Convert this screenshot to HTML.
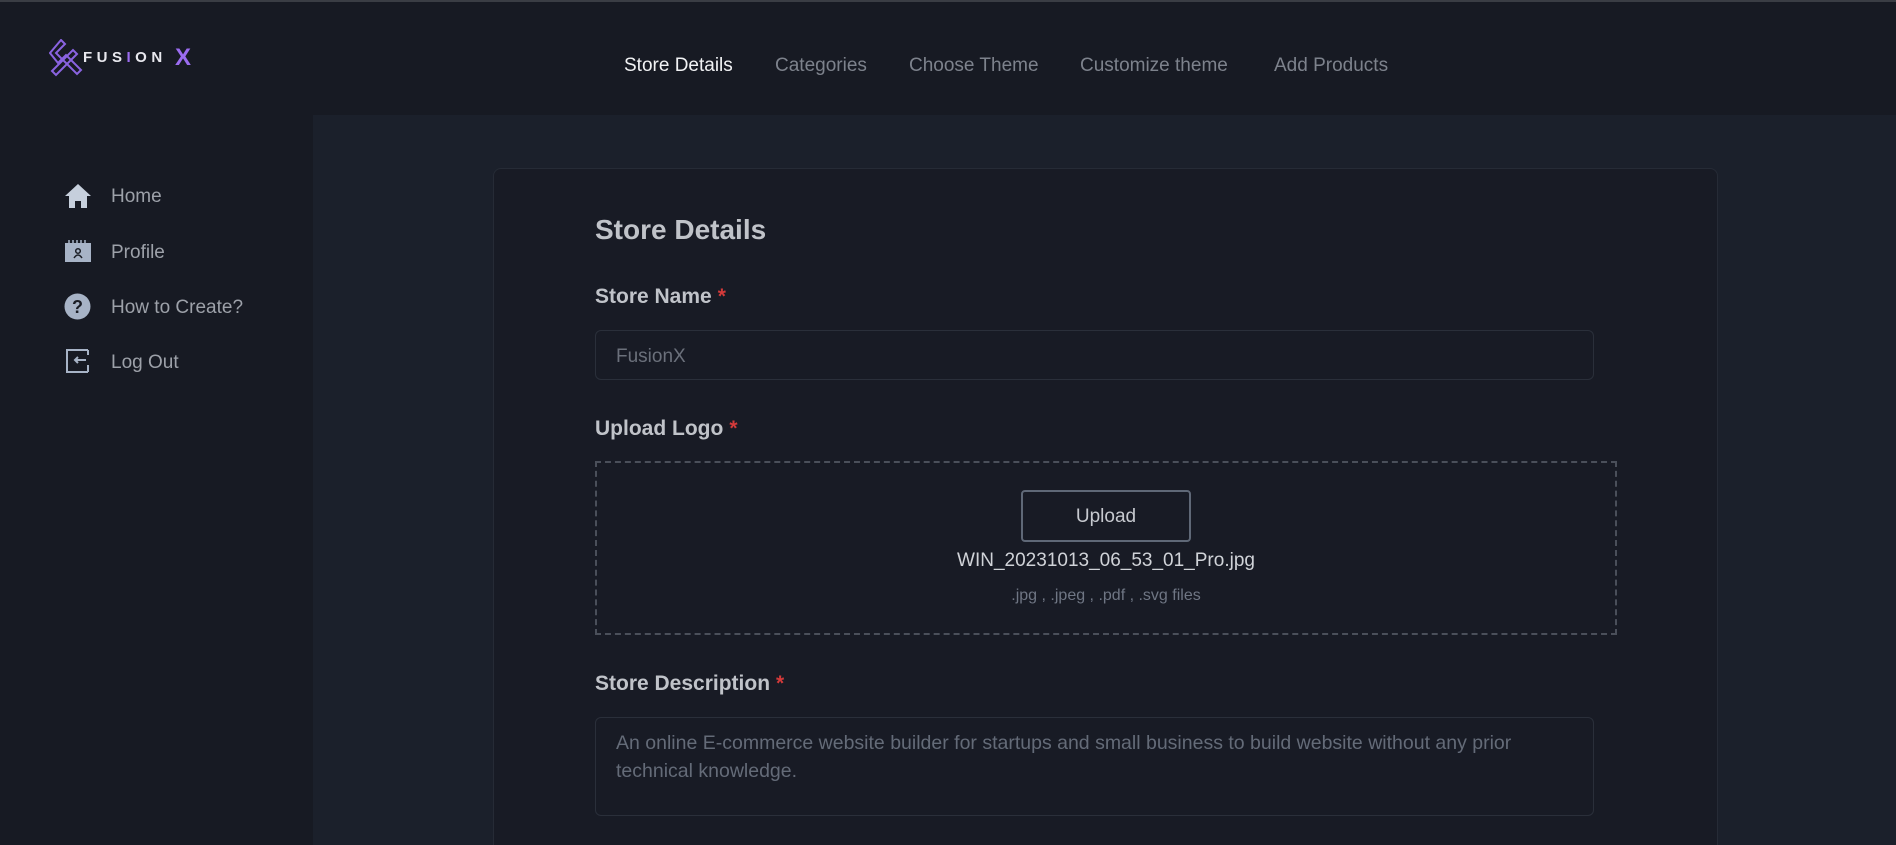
<!DOCTYPE html>
<html><head><meta charset="utf-8"><style>
*{margin:0;padding:0;box-sizing:border-box}
html,body{width:1896px;height:845px;overflow:hidden}
body{background:#171a23;font-family:"Liberation Sans",sans-serif}
#w{position:relative;width:1896px;height:845px;overflow:hidden}
.a{position:absolute;white-space:nowrap}
.top{left:0;top:0;width:1896px;height:2px;background:#3a3d44}
.main{left:313px;top:115px;width:1583px;height:730px;background:#1b202b}
.card{left:493px;top:168px;width:1225px;height:690px;background:#181b25;border:1px solid #262b36;border-radius:8px}
.nav{top:55px;font-size:19px;color:#7d828c}
.side{font-size:19px;color:#9da1a9;left:111px}
.lbl{left:595px;font-size:21px;font-weight:bold;color:#c0c3c9}
.lbl span{color:#d33a3a;margin-left:6px}
.box{border:1px solid #2a2f3a;border-radius:6px;background:#181b25}
</style></head><body><div id="w">
<div class="a top"></div>
<div class="a main"></div>
<div class="a card"></div>

<svg class="a" style="left:49px;top:39px" width="34" height="38" viewBox="0 0 34 38">
<g fill="none" stroke="#8a63e0" stroke-width="2" stroke-linejoin="miter">
<path d="M12 1 L16 5 L7 14 L13 20 L9 24 L1 14 Z"/>
<path d="M3 32 L24 11 L28 15 L7 36 Z"/>
<path d="M13 20 L17 16 L32 31 L28 35 Z"/>
</g>
</svg>
<div class="a" style="left:83px;top:49px;font-size:15px;font-weight:bold;letter-spacing:4.5px;color:#e8e8ee">FUS<span style="color:#9b6cf0">I</span>ON</div>
<div class="a" style="left:175px;top:44px;font-size:24px;font-weight:bold;color:#9b6cf0">X</div>

<div class="a nav" style="left:624px;color:#f1f2f4">Store Details</div>
<div class="a nav" style="left:775px">Categories</div>
<div class="a nav" style="left:909px">Choose Theme</div>
<div class="a nav" style="left:1080px">Customize theme</div>
<div class="a nav" style="left:1274px">Add Products</div>

<svg class="a" style="left:64px;top:183px" width="28" height="26" viewBox="0 0 28 26"><path d="M14 1 L27 13 L23 13 L23 25 L17 25 L17 18 L11 18 L11 25 L5 25 L5 13 L1 13 Z" fill="#c6cfdc"/></svg>
<div class="a side" style="top:186px">Home</div>
<svg class="a" style="left:64px;top:240px" width="28" height="23" viewBox="0 0 28 23"><rect x="1" y="3" width="26" height="19" fill="#a7b3c6"/><path d="M5 0v4M9 0v4M13 0v4M17 0v4M21 0v4" stroke="#a7b3c6" stroke-width="1.5"/><circle cx="14" cy="11" r="2.3" fill="none" stroke="#1a1d25" stroke-width="1.5"/><path d="M10 18 q4 -6 8 0" fill="none" stroke="#1a1d25" stroke-width="1.5"/></svg>
<div class="a side" style="top:242px">Profile</div>
<svg class="a" style="left:64px;top:293px" width="27" height="27" viewBox="0 0 27 27"><circle cx="13.5" cy="13.5" r="13" fill="#a7b3c6"/><text x="13.5" y="20" font-size="18" font-weight="bold" text-anchor="middle" fill="#1a1d25" font-family="Liberation Sans">?</text></svg>
<div class="a side" style="top:297px">How to Create?</div>
<svg class="a" style="left:66px;top:349px" width="24" height="24" viewBox="0 0 24 24"><path d="M22 1 H1 V23 H22 M22 16 V23 M22 1 V6 M20 11 H9 M12 8 L9 11 L12 14" stroke="#a7b3c6" stroke-width="2" fill="none"/></svg>
<div class="a side" style="top:352px">Log Out</div>

<div class="a" style="left:595px;top:214px;font-size:28px;font-weight:bold;color:#c0c3c9">Store Details</div>
<div class="a lbl" style="top:285px">Store Name<span>*</span></div>
<div class="a box" style="left:595px;top:330px;width:999px;height:50px"></div>
<div class="a" style="left:616px;top:346px;font-size:19px;color:#6b707b">FusionX</div>
<div class="a lbl" style="top:417px">Upload Logo<span>*</span></div>
<div class="a" style="left:595px;top:461px;width:1022px;height:174px;border:2px dashed #4a4f5a"></div>
<div class="a" style="left:1021px;top:490px;width:170px;height:52px;border:2px solid #5f6877;border-radius:4px;text-align:center;line-height:50px;font-size:19px;color:#c6c9cf">Upload</div>
<div class="a" style="left:906px;width:400px;text-align:center;top:550px;font-size:19px;color:#d0d3d8">WIN_20231013_06_53_01_Pro.jpg</div>
<div class="a" style="left:906px;width:400px;text-align:center;top:587px;font-size:16px;color:#6f7684">.jpg , .jpeg , .pdf , .svg files</div>
<div class="a lbl" style="top:672px">Store Description<span>*</span></div>
<div class="a box" style="left:595px;top:717px;width:999px;height:99px"></div>
<div class="a" style="left:616px;top:729px;font-size:19.5px;color:#646b78;line-height:28px">An online E-commerce website builder for startups and small business to build website without any prior<br>technical knowledge.</div>
</div></body></html>
